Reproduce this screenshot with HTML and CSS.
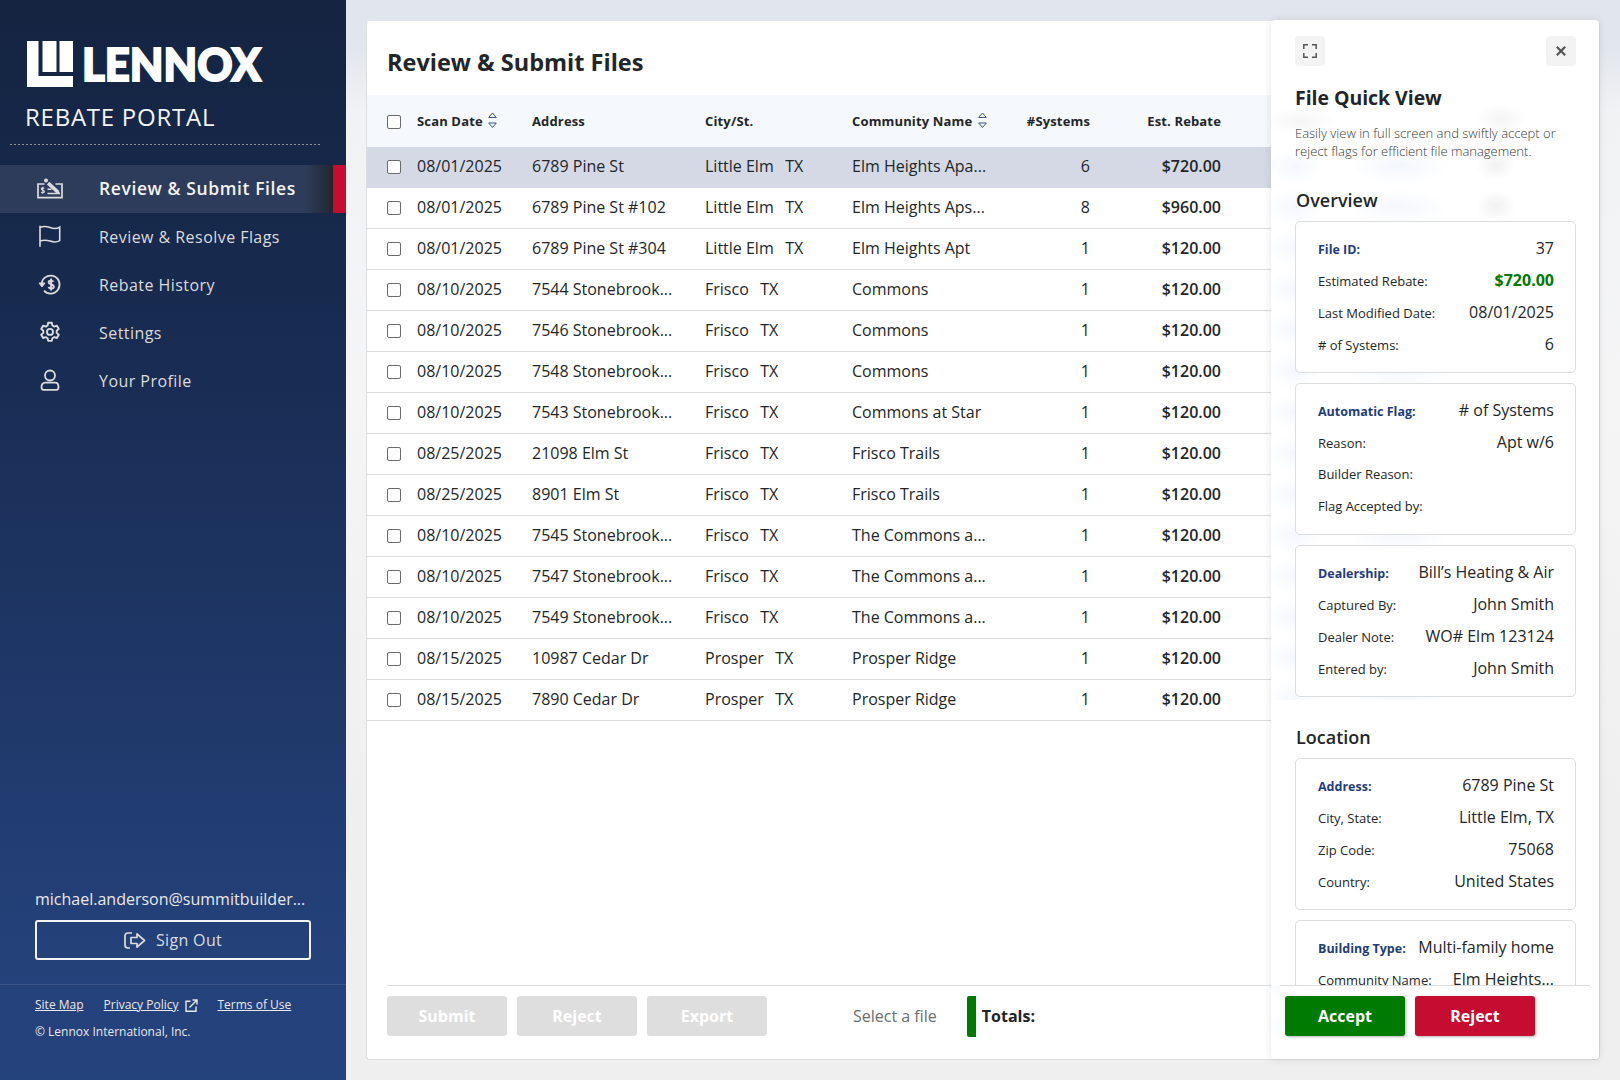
FILE: index.html
```
<!DOCTYPE html>
<html lang="en">
<head>
    <meta charset="UTF-8">
    <meta name="viewport" content="width=device-width, initial-scale=1.0">
    <title>Lennox Rebate Portal</title>
    <link rel="stylesheet" href="styles.css">
</head>
<body>

<aside class="sidebar">
    <div class="brand">
        <svg class="logo" width="240" height="60" viewBox="0 -7 240 60">
            <path fill="#fff" d="M0 0h11.500v35H46v11H0zM15.500 0h14v31h-14zM32.500 0H46v31H32.500z"/>
            <text x="55" y="39.500" textLength="179" lengthAdjust="spacingAndGlyphs">LENNOX</text>
        </svg>
        <div class="portal-name">REBATE PORTAL</div>
    </div>

    <nav class="nav">
        <a class="nav-item active">
            <svg width="28" height="24" viewBox="0 0 28 24" fill="none" stroke="currentColor" stroke-width="1.700">
                <path d="M8.500 7H2v13.700h24V7h-6.500"/>
                <path d="M11.500 12.300h4M11.500 16.500h12.500" stroke-width="1.500"/>
                <path d="M13.300 4.800l9.200 8.400 1.700 4-4.300-1.400-9-8.400z" fill="currentColor" stroke="none"/>
                <circle cx="10" cy="3.400" r="2" fill="currentColor" stroke="none"/>
                <path d="M8.300 11.500c-.8-1-3-.9-3 .5 0 1.600 3.100 1 3.100 2.600s-2.400 1.400-3.200.5M6.800 9.800v7" stroke-width="1.100"/>
            </svg>
            <span>Review &amp; Submit Files</span>
        </a>
        <a class="nav-item">
            <svg width="28" height="24" viewBox="0 0 28 24" fill="none" stroke="currentColor" stroke-width="1.600">
                <path d="M4 .8v21M4 2.500c4-1.800 7-1 10 .1s7 1.300 9.700-.5v13.500c-3 1.800-6.500 1.600-9.700.5s-6-1.500-10 0"/>
            </svg>
            <span>Review &amp; Resolve Flags</span>
        </a>
        <a class="nav-item">
            <svg width="28" height="24" viewBox="0 0 28 24" fill="none" stroke="currentColor" stroke-width="1.800">
                <path d="M5.600 11.500A9 9 0 1 1 8 17.700"/>
                <path d="M3 10h6l-3 4z" fill="currentColor" stroke-width="1"/>
                <path d="M17.600 8.800c-1.200-1.600-5-1.700-5 .5 0 2.700 5.200 1.600 5.200 4.400 0 2.400-4 2.400-5.500.5M15.100 5.500v12" stroke-width="1.900"/>
            </svg>
            <span>Rebate History</span>
        </a>
        <a class="nav-item">
            <svg width="28" height="24" viewBox="0 0 28 24" fill="none" stroke="currentColor" stroke-width="1.900" stroke-linejoin="round">
                <path d="M12.200 1.800h3.600l.6 2.700 1.900 1.100 2.600-.9 1.900 3.200-2.100 1.900v2.100l2.100 1.900-1.900 3.200-2.600-.9-1.900 1.100-.6 2.700h-3.600l-.6-2.700-1.900-1.100-2.600.9-1.900-3.200 2.100-1.900V9.800L5.200 7.900l1.900-3.200 2.600.9 1.900-1.100z"/>
                <circle cx="14" cy="10.900" r="3"/>
            </svg>
            <span>Settings</span>
        </a>
        <a class="nav-item">
            <svg width="28" height="24" viewBox="0 0 28 24" fill="none" stroke="currentColor" stroke-width="1.800">
                <circle cx="14" cy="6.500" r="5"/>
                <path d="M9 13.700h10c2 0 3.500 1.700 3.500 4.300 0 2-.6 2.800-2 2.800h-13c-1.400 0-2-.8-2-2.800 0-2.600 1.500-4.300 3.500-4.300z"/>
            </svg>
            <span>Your Profile</span>
        </a>
    </nav>

    <div class="account">
        <div class="email">michael.anderson@summitbuilder...</div>
        <button class="sign-out">
            <svg width="22" height="17" viewBox="0 0 22 17" fill="none" stroke="currentColor" stroke-width="1.700" stroke-linejoin="round">
                <path d="M8 1H4Q1 1 1 4v9q0 3 3 3h2"/>
                <path d="M7 5.500h6V1.800L20.500 8.500 13 15.200v-3.700H7z"/>
            </svg>
            <span>Sign Out</span>
        </button>
    </div>

    <footer class="legal">
        <div class="legal-links">
            <a>Site Map</a>
            <a class="external">Privacy Policy</a>
            <svg width="13" height="13" viewBox="0 0 13 13" fill="none" stroke="currentColor" stroke-width="1.400">
                <path d="M5.500 2.200H1v10h10V7.500M7.500 1H12v4.500M12 1L4.500 8.500"/>
            </svg>
            <a class="terms">Terms of Use</a>
        </div>
        <div class="copyright">© Lennox International, Inc.</div>
    </footer>
</aside>

<main class="content">
    <section class="files">
        <h1>Review &amp; Submit Files</h1>
        <table>
            <thead>
            <tr>
                <th class="check"><input type="checkbox"></th>
                <th class="date">Scan Date <svg class="sort" width="9" height="17" viewBox="0 0 9 17"><path d="M.7 5.500L4.500 1l3.800 4.500zM.7 11h7.600L4.500 15.500z"/></svg></th>
                <th class="address">Address</th>
                <th class="city">City/St.</th>
                <th class="community">Community Name <svg class="sort" width="9" height="17" viewBox="0 0 9 17"><path d="M.7 5.500L4.500 1l3.800 4.500zM.7 11h7.600L4.500 15.500z"/></svg></th>
                <th class="systems">#Systems</th>
                <th class="rebate">Est. Rebate</th>
                <th></th>
            </tr>
            </thead>
            <tbody id="file-rows"></tbody>
        </table>
        <div class="actions">
            <button>Submit</button>
            <button>Reject</button>
            <button>Export</button>
            <span class="hint">Select a file</span>
            <span class="totals">Totals:</span>
        </div>
    </section>

    <aside class="quick-view">
        <div class="quick-tools">
            <button class="tool">
                <svg width="14" height="14" viewBox="0 0 14 14" fill="none" stroke="currentColor" stroke-width="1.500"><path d="M.8 5V.8H5M9 .8h4.200V5M13.200 9v4.200H9M5 13.200H.8V9"/></svg>
            </button>
            <button class="tool">
                <svg width="10" height="10" viewBox="0 0 10 10" fill="none" stroke="currentColor" stroke-width="2.200"><path d="M.8.8l8.400 8.400M9.200.8L.8 9.200"/></svg>
            </button>
        </div>
        <h2>File Quick View</h2>
        <p class="intro">Easily view in full screen and swiftly accept or reject flags for efficient file management.</p>
        <div class="details">
            <h3>Overview</h3>
            <dl>
                <div><dt>File ID:</dt><dd>37</dd></div>
                <div><dt>Estimated Rebate:</dt><dd class="money">$720.00</dd></div>
                <div><dt>Last Modified Date:</dt><dd>08/01/2025</dd></div>
                <div><dt># of Systems:</dt><dd>6</dd></div>
            </dl>
            <dl>
                <div><dt>Automatic Flag:</dt><dd># of Systems</dd></div>
                <div><dt>Reason:</dt><dd>Apt w/6</dd></div>
                <div><dt>Builder Reason:</dt><dd></dd></div>
                <div><dt>Flag Accepted by:</dt><dd></dd></div>
            </dl>
            <dl>
                <div><dt>Dealership:</dt><dd>Bill’s Heating &amp; Air</dd></div>
                <div><dt>Captured By:</dt><dd>John Smith</dd></div>
                <div><dt>Dealer Note:</dt><dd>WO# Elm 123124</dd></div>
                <div><dt>Entered by:</dt><dd>John Smith</dd></div>
            </dl>
            <h3 class="location">Location</h3>
            <dl>
                <div><dt>Address:</dt><dd>6789 Pine St</dd></div>
                <div><dt>City, State:</dt><dd>Little Elm, TX</dd></div>
                <div><dt>Zip Code:</dt><dd>75068</dd></div>
                <div><dt>Country:</dt><dd>United States</dd></div>
            </dl>
            <dl>
                <div><dt>Building Type:</dt><dd>Multi-family home</dd></div>
                <div><dt>Community Name:</dt><dd>Elm Heights...</dd></div>
            </dl>
        </div>
        <div class="quick-actions">
            <button class="accept">Accept</button>
            <button class="reject">Reject</button>
        </div>
    </aside>
</main>

<script>
    const files = [
        { date: '08/01/2025', address: '6789 Pine St', city: 'Little Elm', community: 'Elm Heights Apa...', systems: 6, rebate: 720 },
        { date: '08/01/2025', address: '6789 Pine St #102', city: 'Little Elm', community: 'Elm Heights Aps...', systems: 8, rebate: 960 },
        { date: '08/01/2025', address: '6789 Pine St #304', city: 'Little Elm', community: 'Elm Heights Apt', systems: 1, rebate: 120 },
        { date: '08/10/2025', address: '7544 Stonebrook...', city: 'Frisco', community: 'Commons', systems: 1, rebate: 120 },
        { date: '08/10/2025', address: '7546 Stonebrook...', city: 'Frisco', community: 'Commons', systems: 1, rebate: 120 },
        { date: '08/10/2025', address: '7548 Stonebrook...', city: 'Frisco', community: 'Commons', systems: 1, rebate: 120 },
        { date: '08/10/2025', address: '7543 Stonebrook...', city: 'Frisco', community: 'Commons at Star', systems: 1, rebate: 120 },
        { date: '08/25/2025', address: '21098 Elm St', city: 'Frisco', community: 'Frisco Trails', systems: 1, rebate: 120 },
        { date: '08/25/2025', address: '8901 Elm St', city: 'Frisco', community: 'Frisco Trails', systems: 1, rebate: 120 },
        { date: '08/10/2025', address: '7545 Stonebrook...', city: 'Frisco', community: 'The Commons a...', systems: 1, rebate: 120 },
        { date: '08/10/2025', address: '7547 Stonebrook...', city: 'Frisco', community: 'The Commons a...', systems: 1, rebate: 120 },
        { date: '08/10/2025', address: '7549 Stonebrook...', city: 'Frisco', community: 'The Commons a...', systems: 1, rebate: 120 },
        { date: '08/15/2025', address: '10987 Cedar Dr', city: 'Prosper', community: 'Prosper Ridge', systems: 1, rebate: 120 },
        { date: '08/15/2025', address: '7890 Cedar Dr', city: 'Prosper', community: 'Prosper Ridge', systems: 1, rebate: 120 }
    ];

    const tableBody = document.getElementById('file-rows');
    files.forEach((file, index) => {
        const row = document.createElement('tr');
        if (index === 0) {
            row.classList.add('selected');
        }
        row.innerHTML = `
            <td class="check"><input type="checkbox"></td>
            <td>${file.date}</td>
            <td>${file.address}</td>
            <td>${file.city}<span class="state">TX</span></td>
            <td>${file.community}</td>
            <td class="systems">${file.systems}</td>
            <td class="rebate">$${file.rebate.toFixed(2)}</td>
            <td></td>`;
        tableBody.appendChild(row);
    });
</script>

</body>
</html>
```
FILE: styles.css
```
* {
    box-sizing: border-box;
}
body {
    margin: 0;
    display: flex;
    height: 1080px;
    overflow: hidden;
    font-family: "Open Sans", "Noto Sans", sans-serif;
    font-size: 16px;
    color: #232628;
    background: #efefef;
}
button {
    font-family: inherit;
    border: none;
    padding: 0;
}
h1, h2, h3, p, dl, dd {
    margin: 0;
}

/* Sidebar */
.sidebar {
    width: 346px;
    display: flex;
    flex-direction: column;
    color: #dcdcdc;
    background: linear-gradient(#142441, #182b50 30%, #24417a 88%, #24427c);
    box-shadow: 0 0 6px rgba(0, 0, 0, 0.15);
}
.brand {
    height: 145px;
    margin: 0 26px 0 10px;
    padding: 34px 0 0 17px;
    background: repeating-linear-gradient(90deg, #8f9193 0 2px, transparent 2px 4px) left bottom / 100% 1px no-repeat;
}
.logo {
    display: block;
}
.logo text {
    font-family: Lato, sans-serif;
    font-weight: 900;
    font-size: 46px;
    fill: #fff;
    stroke: #fff;
    stroke-width: 2px;
}
.portal-name {
    margin-left: -2px;
    margin-top: 6px;
    font-size: 24px;
    line-height: 34px;
    letter-spacing: 0.750px;
    color: #f3f3f3;
}
.nav {
    margin-top: 20px;
}
.nav-item {
    display: flex;
    align-items: center;
    height: 48px;
    padding-left: 36px;
    gap: 35px;
    font-size: 16px;
    font-weight: 500;
    letter-spacing: 0.450px;
}
.nav-item.active {
    font-size: 17.500px;
    font-weight: 600;
    letter-spacing: 0.600px;
    color: #f3f3f3;
    background: linear-gradient(90deg, transparent 305px, #22262e 333px), #2d3c5b;
    border-right: 13px solid #c60c30;
}
.nav-item.active span {
    padding-bottom: 2px;
}
.nav-item.active svg {
    color: #dcdcdc;
}
.account {
    margin-top: auto;
    padding: 0 35px;
}
.email {
    line-height: 24px;
    margin-bottom: 9px;
    white-space: nowrap;
    color: #e8e8e8;
}
.sign-out {
    display: flex;
    align-items: center;
    justify-content: center;
    gap: 10px;
    width: 276px;
    height: 40px;
    font-size: 16px;
    font-weight: 500;
    letter-spacing: 0.350px;
    color: #dcdcdc;
    background: none;
    border: 2px solid #f3f3f3;
    border-radius: 3px;
}
.legal {
    height: 96px;
    margin-top: 24px;
    padding: 11px 35px 0;
    border-top: 1px solid #3b5488;
    font-size: 12px;
    line-height: 18px;
    color: #e8e8e8;
}
.legal-links {
    display: flex;
    align-items: center;
}
.legal-links a {
    text-decoration: underline;
}
.legal-links .external {
    margin: 0 6px 0 20px;
}
.legal-links .terms {
    margin-left: 20px;
}
.copyright {
    margin-top: 9px;
}

/* Files table */
.content {
    position: relative;
    flex: 1;
    padding: 21px 20px 20px;
    background: linear-gradient(#e0e5ee, #e2e6ee 50px, #f1f2f4 110px, #f5f5f6 400px, #efefef 800px);
}
.files {
    height: 1039px;
    display: flex;
    flex-direction: column;
    background: #fff;
    border: 1px solid #dcdddf;
    border-top-color: #fff;
    border-radius: 4px;
}
h1 {
    height: 73px;
    padding: 20px 20px 0;
    font-size: 23.500px;
    line-height: 40px;
}
table {
    table-layout: fixed;
    width: 100%;
    border-spacing: 0;
}
th {
    height: 52px;
    padding: 0;
    text-align: left;
    font-size: 13px;
    letter-spacing: 0.150px;
    background: #f5f8fd;
    white-space: nowrap;
}
td {
    height: 41px;
    padding: 0 0 2px;
    border-bottom: 1px solid #dcdddf;
    white-space: nowrap;
}
.selected td {
    background: #d4d9e5;
    border-color: #d4d9e5;
}
.check {
    width: 50px;
    padding-left: 20px;
}
.check input {
    appearance: none;
    display: block;
    width: 14px;
    height: 14px;
    margin: 2px 0 0;
    background: #fff;
    border: 1px solid #6b6b6b;
    border-radius: 2px;
}
.date {
    width: 115px;
}
.address {
    width: 173px;
}
.city {
    width: 147px;
}
.community {
    width: 150px;
}
.systems {
    width: 88px;
    text-align: right;
}
.rebate {
    width: 131px;
    text-align: right;
}
td.rebate {
    font-weight: 600;
}
.state {
    margin-left: 11.500px;
}
.sort {
    margin-left: 2px;
    vertical-align: -3px;
    fill: none;
    stroke: #3c5488;
}
.actions {
    display: flex;
    align-items: center;
    gap: 10px;
    height: 74px;
    margin: auto 20px 0;
    padding-bottom: 13px;
    border-top: 1px solid #dcdddf;
}
.actions button, .quick-actions button {
    width: 120px;
    height: 40px;
    font-size: 16px;
    font-weight: 700;
    color: #fff;
    border-radius: 3px;
}
.actions button {
    background: #dedede;
}
.hint {
    margin-left: 76px;
    color: #6b6e70;
}
.totals {
    margin-left: 20px;
    padding-left: 15px;
    background: linear-gradient(#007a00, #007a00) left / 9px 100% no-repeat;
    border-radius: 2px;
    line-height: 41px;
    font-weight: 700;
}

/* Quick view panel over the table */
.quick-view {
    position: absolute;
    top: 20px;
    right: 21px;
    width: 328px;
    height: 1039px;
    display: flex;
    flex-direction: column;
    background:
        radial-gradient(35px 14px at 30px 101px, #f5f5f5, transparent) no-repeat,
        radial-gradient(25px 16px at 230px 99px, #f4f4f4, transparent) no-repeat,
        radial-gradient(20px 16px at 225px 145px, #f1f1f1, transparent) no-repeat,
        radial-gradient(20px 16px at 225px 186px, #f1f1f1, transparent) no-repeat,
        linear-gradient(#fff, #fff) 0 0 / 100% 125px no-repeat,
        radial-gradient(28px 18px at 24px 21px, #f3f7fd, transparent) 0 125px / 328px 41px repeat-y,
        radial-gradient(50px 18px at 128px 21px, #f3f7fd, transparent) 0 125px / 328px 41px repeat-y,
        #fff;
    border-radius: 4px;
    box-shadow: 0 0 8px rgba(0, 0, 0, 0.11);
}
.quick-tools {
    display: flex;
    justify-content: space-between;
    padding: 16px 23px 0 24px;
}
.tool {
    display: flex;
    align-items: center;
    justify-content: center;
    width: 30px;
    height: 30px;
    color: #555;
    background: #f3f3f3;
    border-radius: 4px;
}
h2 {
    margin: 17px 24px 0;
    font-size: 19.500px;
    line-height: 30px;
    letter-spacing: -0.050px;
}
.intro {
    margin: 11px 24px 0;
    font-size: 13px;
    font-weight: 300;
    line-height: 18px;
    color: #36393c;
}
.details {
    flex: 1;
    min-height: 0;
    overflow: hidden;
    padding: 25px 23px 0 24px;
    background: linear-gradient(#fff, #fff) 0 540px / 100% 400px no-repeat;
}
h3 {
    height: 36px;
    padding-left: 1px;
    font-size: 18px;
    font-weight: 600;
    line-height: 30px;
}
.location {
    margin-top: 25px;
    height: 36px;
}
dl {
    height: 152px;
    margin-bottom: 10px;
    padding: 11px 21px 11px 22px;
    background: #fff;
    border: 1px solid #dcdddf;
    border-radius: 5px;
}
dl div {
    display: flex;
    justify-content: space-between;
    align-items: baseline;
    height: 32px;
    line-height: 30px;
    white-space: nowrap;
}
dt {
    font-size: 13px;
}
dl div:first-child dt {
    font-size: 12.500px;
    font-weight: 700;
    color: #1f3d7c;
}
.money {
    font-weight: 700;
    color: #007a00;
}
.quick-actions {
    display: flex;
    gap: 10px;
    height: 74px;
    margin: 0 9px;
    padding: 10px 5px 0;
    background: #fff;
    border-top: 1px solid #dcdddf;
}
.quick-actions button {
    box-shadow: 1px 1px 3px rgba(0, 0, 0, 0.3);
}
.quick-actions .accept {
    background: #007a00;
}
.quick-actions .reject {
    background: #c60c30;
}
```
